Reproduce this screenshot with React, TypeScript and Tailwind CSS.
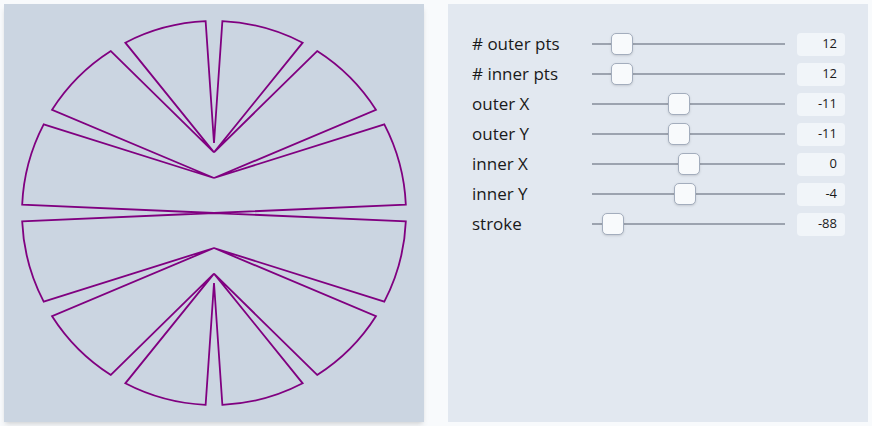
import React from "react";

interface IControl {
  label: string;
  value: number;
  min: number;
  max: number;
}

const controls: IControl[] = [
  { label: "# outer pts", value: 12, min: 1, max: 100 },
  { label: "# inner pts", value: 12, min: 1, max: 100 },
  { label: "outer X", value: -11, min: -100, max: 100 },
  { label: "outer Y", value: -11, min: -100, max: 100 },
  { label: "inner X", value: 0, min: -100, max: 100 },
  { label: "inner Y", value: -4, min: -100, max: 100 },
  { label: "stroke", value: -88, min: -100, max: 100 },
];

// wedge star: outer arcs on a circle, inner points squashed on a vertical line
const buildPath = (cx: number, cy: number) => {
  const count = 12;
  const outerR = 192;
  const innerRx = 0;
  const innerRy = 70;
  const gap = 2.5;
  const step = 360 / count;
  const rad = (d: number) => (d * Math.PI) / 180;
  const pt = (rx: number, ry: number, deg: number) =>
    `${(cx + rx * Math.sin(rad(deg))).toFixed(2)} ${(cy - ry * Math.cos(rad(deg))).toFixed(2)}`;

  let d = "";
  for (let k = 0; k < count; k++) {
    const a = k * step;
    d += `${k === 0 ? "M" : "L"} ${pt(innerRx, innerRy, a)} `;
    d += `L ${pt(outerR, outerR, a + gap)} `;
    d += `A ${outerR} ${outerR} 0 0 1 ${pt(outerR, outerR, a + step - gap)} `;
  }
  return d + "Z";
};

const Slider = ({ value, min, max }: { value: number; min: number; max: number }) => {
  const frac = (value - min) / (max - min);

  return (
    <div className="relative flex-1 h-[22px] flex items-center">
      <div className="w-full h-[2px] bg-[#9ca3af]" />
      <div
        className="absolute top-0 w-[22px] h-[22px] rounded-[5px] bg-[#f8fafc] border border-[#a3adbd] shadow-sm"
        style={{ left: `calc(${frac} * (100% - 22px))` }}
      />
    </div>
  );
};

const App = () => {
  return (
    <div
      className="flex gap-6 p-1 h-[426px] bg-[#f8fafc] text-[#1a1a1a]"
      style={{ fontFamily: '"Open Sans", "Noto Sans", sans-serif' }}
    >
      <div className="w-[420px] h-[418px] bg-[#cbd5e1] shadow-md">
        <svg width="420" height="418" viewBox="0 0 420 418">
          <path
            d={buildPath(210, 209)}
            fill="none"
            stroke="#800080"
            strokeWidth={1.8}
            strokeLinejoin="miter"
          />
        </svg>
      </div>

      <div className="flex-1 h-[418px] bg-[#e2e8f0] pl-6 pr-[23px] pt-[25px]">
        {controls.map((c) => (
          <div key={c.label} className="flex items-center h-[30px]">
            <span className="w-[120px] text-[17px]">{c.label}</span>
            <Slider value={c.value} min={c.min} max={c.max} />
            <div className="ml-3 w-[48px] h-[23px] rounded-[4px] bg-[#f1f5f9] flex items-center justify-end pr-2 text-[13px]">
              {c.value}
            </div>
          </div>
        ))}
      </div>
    </div>
  );
};

export default App;
